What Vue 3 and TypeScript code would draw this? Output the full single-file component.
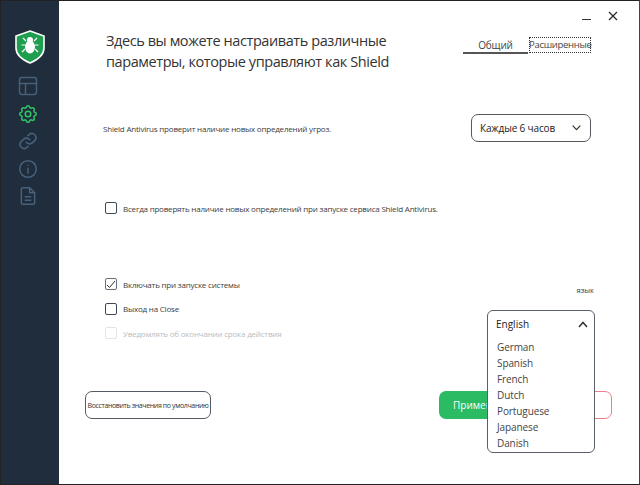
<script setup lang="ts">
const langs: string[] = ['German', 'Spanish', 'French', 'Dutch', 'Portuguese', 'Japanese', 'Danish']
</script>

<template>
  <div class="window">
    <aside class="sidebar">
      <svg class="logo" width="32" height="34" viewBox="0 0 32 34">
        <path d="M16 1 L30 6 V18 C30 25 23 30 16 33 C9 30 2 25 2 18 V6 Z" fill="#1e9e4e" stroke="#fff" stroke-width="1.6" />
        <g stroke="#fff" stroke-width="1.2" fill="none">
          <path d="M12 11 L9 8 M20 11 L23 8 M11 15 H7.5 M21 15 H24.5 M11 19 L8 22 M21 19 L24 22" />
        </g>
        <ellipse cx="16" cy="17" rx="5" ry="6.5" fill="#fff" />
        <circle cx="16" cy="10" r="3" fill="#fff" />
      </svg>
      <svg class="nav" width="20" height="20" viewBox="0 0 20 20" fill="none" stroke="#47617a" stroke-width="1.5">
        <rect x="1.500" y="1.500" width="17" height="17" rx="2.500" /><path d="M1.500 7.500 H18.500 M7.500 7.500 V18.500" />
      </svg>
      <svg class="nav gear" width="22" height="22" viewBox="0 0 24 24" fill="none" stroke="#2fc463" stroke-width="1.7" stroke-linejoin="round">
        <circle cx="12" cy="12" r="3" />
        <path d="M10.3 4.3c.4-1.8 3-1.8 3.4 0a1.7 1.7 0 0 0 2.6 1.1c1.5-.9 3.3.8 2.4 2.4a1.7 1.7 0 0 0 1 2.5c1.8.4 1.8 3 0 3.4a1.7 1.7 0 0 0-1 2.600c.9 1.500-.9 3.300-2.400 2.400a1.700 1.700 0 0 0-2.600 1c-.4 1.800-3 1.800-3.400 0a1.700 1.700 0 0 0-2.600-1c-1.500.9-3.300-.9-2.400-2.400a1.700 1.700 0 0 0-1-2.600c-1.800-.4-1.800-3 0-3.400a1.700 1.700 0 0 0 1-2.500c-.9-1.600.9-3.300 2.400-2.400a1.700 1.700 0 0 0 2.600-1.100z" />
      </svg>
      <svg class="nav" width="20" height="20" viewBox="0 0 24 24" fill="none" stroke="#47617a" stroke-width="1.9" stroke-linecap="round">
        <path d="M10 13.500a5 5 0 0 0 7.500.5l3-3a5 5 0 0 0-7-7l-1.700 1.700" />
        <path d="M14 10.500a5 5 0 0 0-7.500-.5l-3 3a5 5 0 0 0 7 7l1.700-1.700" />
      </svg>
      <svg class="nav" width="20" height="20" viewBox="0 0 24 24" fill="none" stroke="#47617a" stroke-width="1.8" stroke-linecap="round">
        <circle cx="12" cy="12" r="10" /><path d="M12 11 V17 M12 7.500 V7.600" />
      </svg>
      <svg class="nav" width="20" height="20" viewBox="0 0 24 24" fill="none" stroke="#47617a" stroke-width="1.8" stroke-linejoin="round">
        <path d="M14 2 H6 a2 2 0 0 0-2 2 V20 a2 2 0 0 0 2 2 H18 a2 2 0 0 0 2-2 V8 Z M14 2 V8 H20 M8 13 H16 M8 17 H16" />
      </svg>
    </aside>

    <main class="main">
      <div class="winctl">
        <span class="min"></span>
        <svg width="10" height="10" viewBox="0 0 10 10" stroke="#2b2b2b" stroke-width="1.300"><path d="M1 1 L9 9 M9 1 L1 9" /></svg>
      </div>

      <header class="head">
        <h1 class="title">Здесь вы можете настраивать различные<br />параметры, которые управляют как Shield</h1>
        <nav class="tabs">
          <span class="tab active">Общий</span>
          <span class="tab focus">Расширенные</span>
        </nav>
      </header>

      <section class="update">
        <span class="small">Shield Antivirus проверит наличие новых определений угроз.</span>
        <div class="select">
          <span>Каждые 6 часов</span>
          <svg width="9" height="6" viewBox="0 0 9 6" fill="none" stroke="#333" stroke-width="1.200"><path d="M.7 .7 L4.500 4.700 L8.300 .7" /></svg>
        </div>
      </section>

      <label class="check always"><i class="box"></i><span class="small">Всегда проверять наличие новых определений при запуске сервиса Shield Antivirus.</span></label>

      <section class="opts">
        <div class="optlist">
          <label class="check">
            <i class="box on"><svg width="10" height="9" viewBox="0 0 10 9" fill="none" stroke="#333" stroke-width="1"><path d="M1 5 L3.500 7.500 L9 1" /></svg></i>
            <span class="small">Включать при запуске системы</span>
          </label>
          <label class="check"><i class="box"></i><span class="small">Выход на Close</span></label>
          <label class="check dis"><i class="box"></i><span class="small">Уведомлять об окончании срока действия</span></label>
        </div>
        <span class="lang">язык</span>
      </section>

      <footer class="foot">
        <button class="reset">Восстановить значения по умолчанию</button>
        <div class="actions">
          <button class="apply">Применить</button>
          <button class="cancel"></button>
        </div>
      </footer>

      <div class="dropdown">
        <div class="dd-head">
          <span>English</span>
          <svg width="10" height="7" viewBox="0 0 10 7" fill="none" stroke="#333" stroke-width="1.500"><path d="M1 6 L5 1.500 L9 6" /></svg>
        </div>
        <ul class="dd-list">
          <li v-for="l in langs" :key="l">{{ l }}</li>
        </ul>
      </div>
    </main>
  </div>
</template>

<style>
html, body { margin: 0; background: #fff; }
</style>

<style scoped>
.window {
  width: 640px; height: 485px; box-sizing: border-box; display: flex; overflow: hidden;
  border: 1px solid #222; border-right-color: #444;
  font-family: "Open Sans", "Noto Sans", sans-serif; color: #333; background: #fff;
}
.sidebar {
  width: 58px; flex: none; background: #1f2d3d; display: flex; flex-direction: column; align-items: center;
  padding-top: 29px; box-sizing: border-box;
}
.logo { margin-bottom: 12px; }
.nav { margin-bottom: 7.500px; margin-right: 4px; }
.gear { margin-top: -1px; margin-bottom: 6.500px; }
.main { position: relative; flex: 1; padding: 0 48px 0 44px; box-sizing: border-box; min-width: 0; }
.winctl { position: absolute; top: 10px; right: 21px; display: flex; align-items: center; gap: 17px; }
.min { width: 9px; height: 1.500px; background: #333; margin-top: 7px; }
.head { display: flex; justify-content: space-between; padding-top: 29px; height: 54px; }
.title { margin: 0 0 0 3px; font-weight: 400; font-size: 14.500px; line-height: 21px; color: #333; letter-spacing: -.42px; white-space: nowrap; }
.tabs { display: flex; font-size: 10px; margin-top: 7px; height: 17px; }
.tab { display: block; line-height: 14px; white-space: nowrap; }
.active { width: 65px; text-align: center; border-bottom: 2px solid #555; height: 17px; padding-top: 1px; box-sizing: border-box; color: #444; letter-spacing: -.15px; }
.focus { outline: 1px dotted #333; outline-offset: -1px; width: 62px; height: 16px; margin-left: 1px; padding-top: 1px; box-sizing: border-box; color: #444; font-size: 9.500px; letter-spacing: -.3px; }
.update { display: flex; justify-content: space-between; align-items: center; margin-top: 30px; margin-left: 0; height: 28px; }
.small { font-size: 8px; letter-spacing: -.2px; color: #3c3c3c; white-space: nowrap; }
.select {
  width: 120px; height: 28px; box-sizing: border-box; border: 1px solid #55595f; border-radius: 7px; display: flex;
  align-items: center; justify-content: space-between; padding: 0 9px 0 8px; font-size: 10px; letter-spacing: -.15px; color: #222;
}
.check { display: flex; align-items: center; gap: 6px; height: 14px; margin-left: 2px; }
.always { margin-top: 59px; }
.box {
  display: flex; align-items: center; justify-content: center; width: 12px; height: 12px; box-sizing: border-box;
  border: 1.500px solid #3d4756; border-radius: 2px; flex: none;
}
.on { border-color: #68707c; }
.dis .box { border-color: #dfe5e8; }
.dis .small { color: #b9bdc0; }
.opts { display: flex; justify-content: space-between; margin-top: 62px; }
.optlist { display: flex; flex-direction: column; gap: 10.500px; }
.lang { font-size: 7.500px; color: #2c3e50; margin-top: 8px; margin-right: -3px; }
.foot { display: flex; justify-content: space-between; margin-top: 51px; margin-left: -18px; margin-right: -21px; }
.reset {
  width: 126px; height: 28px; background: #fff; border: 1px solid #555b63; border-radius: 7px; padding: 0;
  font: 7px "Open Sans", sans-serif; color: #333; white-space: nowrap; letter-spacing: -.37px;
}
.actions { display: flex; }
.apply {
  width: 90px; height: 28px; background: #2bbb62; border: 0; border-radius: 7px; color: #fff; padding: 0 0 0 14px; text-align: left;
  font: 10px "Open Sans", sans-serif;
}
.cancel { width: 84px; height: 28px; background: #fff; border: 1px solid #f07e8a; border-radius: 7px; margin-left: -1px; }
.dropdown {
  position: absolute; left: 428px; top: 309px; width: 108px; height: 143px; box-sizing: border-box; background: #fff;
  border: 1px solid #5a6068; border-radius: 6px; font-size: 10px; color: #333;
}
.dd-head { display: flex; justify-content: space-between; align-items: center; height: 26px; padding: 0 6px 0 8px; color: #222; }
.dd-list { list-style: none; margin: 0; padding: 2px 0 0 9px; }
.dd-list li { height: 16px; line-height: 16px; color: #444; letter-spacing: -.1px; }
</style>
